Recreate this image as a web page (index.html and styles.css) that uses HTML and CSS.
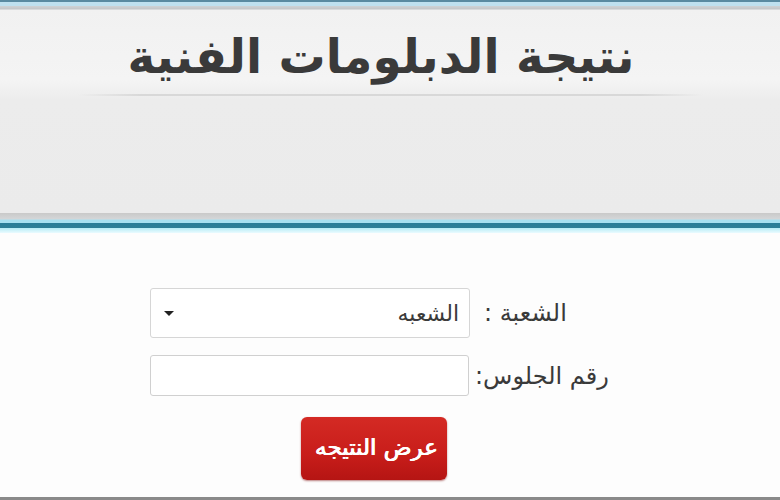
FILE: index.html
```html
<!DOCTYPE html>
<html lang="ar">
<head>
<meta charset="utf-8">
<link rel="stylesheet" href="styles.css">
</head>
<body>
<header class="banner">
  <div class="panel">
    <h1 class="title">نتيجة الدبلومات الفنية</h1>
    <div class="rule"></div>
  </div>
</header>
<main class="form">
  <div class="row row-1">
    <div class="select"><span class="caret"></span><span class="value">الشعبه</span></div>
    <label class="label">الشعبة :</label>
  </div>
  <div class="row row-2">
    <div class="input"></div>
    <label class="label">رقم الجلوس:</label>
  </div>
  <div class="row row-3">
    <button class="btn"><span class="btn-text">عرض النتيجه</span></button>
  </div>
</main>
<div class="bottom"></div>
</body>
</html>
```
FILE: styles.css
```css
html, body { margin: 0; padding: 0; }
body {
  width: 780px;
  height: 500px;
  overflow: hidden;
  background: #fdfdfd;
  font-family: "DejaVu Sans", sans-serif;
  color: #333;
  display: flex;
  flex-direction: column;
}
.banner {
  height: 233px;
  flex: none;
  background: linear-gradient(to bottom,
    #5a8aa0 0, #5a8aa0 2px,
    #bfe0ee 2px, #bfe0ee 6px,
    #cfd2d4 6px, #c4c6c8 9px,
    #eeeeee 10px, #eeeeee 212px,
    #c9c9c9 213px, #d4d6d8 219px,
    #a8e0f0 220px, #a8e0f0 223px,
    #2a7d98 223px, #2f7f97 228px,
    #b8ecf6 228px, #eafbff 233px);
  display: flex;
  flex-direction: column;
}
.panel {
  margin-top: 10px;
  height: 203px;
  background: linear-gradient(to bottom, #f1f1f1 0, #f4f4f4 70px, #ececec 90px, #ebebeb 200px);
  display: flex;
  flex-direction: column;
  align-items: center;
}
.title {
  margin: 16px 0 0 0;
  font-size: 47px;
  font-weight: bold;
  color: #3a3a3a;
  line-height: 62px;
  direction: rtl;
  position: relative;
  left: -9px;
}
.rule {
  margin-top: 6px;
  width: 625px;
  height: 2px;
  background: linear-gradient(to right, rgba(200,200,200,0), #d8d8d8 10%, #d8d8d8 90%, rgba(200,200,200,0));
}
.form {
  flex: 1;
  display: flex;
  flex-direction: column;
  padding-left: 150px;
  padding-top: 55px;
}
.row { display: flex; align-items: center; }
.row-2 { margin-top: 17px; }
.row-3 { margin-top: 21px; padding-left: 151px; }
.select {
  width: 320px;
  height: 50px;
  border: 1px solid #d6d6d6;
  border-radius: 3px;
  background: #fff;
  display: flex;
  align-items: center;
  justify-content: space-between;
  padding: 0 10px 0 10px;
  box-sizing: border-box;
}
.caret {
  width: 0; height: 0;
  border-left: 5px solid transparent;
  border-right: 5px solid transparent;
  border-top: 5px solid #222;
  margin-left: 3px;
}
.value { font-size: 22px; color: #3a3a3a; direction: rtl; }
.input {
  width: 319px;
  height: 41px;
  border: 1px solid #d0d0d0;
  border-radius: 3px;
  background: #fff;
  box-sizing: border-box;
}
.label {
  font-size: 24px;
  color: #3a3a3a;
  direction: rtl;
  margin-left: 14px;
}
.row-2 .label { margin-left: 6px; }
.btn {
  width: 146px;
  height: 63px;
  border: none;
  border-radius: 6px;
  background: linear-gradient(to bottom, #d42a24 0, #c81d1a 60%, #b51513 100%);
  box-shadow: 0 1px 2px rgba(120,0,0,0.5);
  color: #fff;
  font-family: "DejaVu Sans", sans-serif;
  font-size: 23px;
  font-weight: normal;
  text-shadow: 0.5px 0 0 #fff, -0.5px 0 0 #fff;
  direction: rtl;
  padding: 0 9px 4px 0;
  display: flex;
  align-items: center;
  justify-content: flex-start;
  white-space: nowrap;
}
.btn-text { flex: none; }
.bottom {
  height: 3px;
  flex: none;
  background: #8a8a8a;
}
```
